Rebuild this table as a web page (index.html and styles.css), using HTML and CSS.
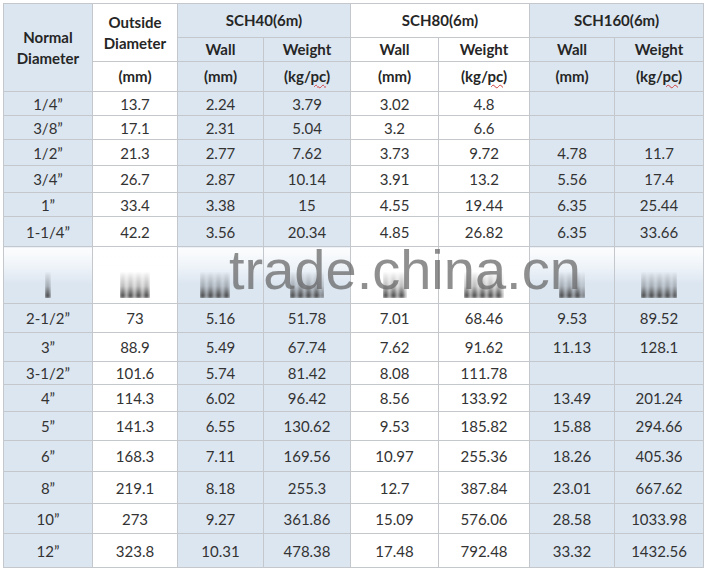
FILE: index.html
```html
<!DOCTYPE html>
<html>
<head>
<meta charset="utf-8">
<link rel="stylesheet" href="styles.css">
</head>
<body>
<div class="wrap">
<table class="pipes">
<colgroup>
<col class="w89"><col class="w85"><col class="w86"><col class="w87"><col class="w88"><col class="w91"><col class="w85"><col class="w89">
</colgroup>
<thead>
<tr class="h34">
<th class="b" rowspan="3">Normal<br>Diameter</th>
<th rowspan="2">Outside<br>Diameter</th>
<th class="b" colspan="2">SCH40(6m)</th>
<th colspan="2">SCH80(6m)</th>
<th class="b" colspan="2">SCH160(6m)</th>
</tr>
<tr class="h24">
<th class="b">Wall</th><th class="b">Weight</th>
<th>Wall</th><th>Weight</th>
<th class="b">Wall</th><th class="b">Weight</th>
</tr>
<tr class="h30">
<th>(mm)</th>
<th class="b">(mm)</th><th class="b">(kg/<span class="sp">pc</span>)</th>
<th>(mm)</th><th>(kg/<span class="sp">pc</span>)</th>
<th class="b">(mm)</th><th class="b">(kg/<span class="sp">pc</span>)</th>
</tr>
</thead>
<tbody>
<tr class="h24"><td>1/4”</td><td>13.7</td><td>2.24</td><td>3.79</td><td>3.02</td><td>4.8</td><td></td><td></td></tr>
<tr class="h24"><td>3/8”</td><td>17.1</td><td>2.31</td><td>5.04</td><td>3.2</td><td>6.6</td><td></td><td></td></tr>
<tr class="h26"><td>1/2”</td><td>21.3</td><td>2.77</td><td>7.62</td><td>3.73</td><td>9.72</td><td>4.78</td><td>11.7</td></tr>
<tr class="h27"><td>3/4”</td><td>26.7</td><td>2.87</td><td>10.14</td><td>3.91</td><td>13.2</td><td>5.56</td><td>17.4</td></tr>
<tr class="h24"><td>1”</td><td>33.4</td><td>3.38</td><td>15</td><td>4.55</td><td>19.44</td><td>6.35</td><td>25.44</td></tr>
<tr class="h30"><td>1-1/4”</td><td>42.2</td><td>3.56</td><td>20.34</td><td>4.85</td><td>26.82</td><td>6.35</td><td>33.66</td></tr>
<tr class="h57 blur">
<td><span class="smear s6"></span></td>
<td><span class="smear s30"></span></td>
<td><span class="smear s30 shift"></span></td>
<td><span class="smear s34"></span></td>
<td><span class="smear s24"></span></td>
<td><span class="smear s40"></span></td>
<td><span class="smear s26"></span></td>
<td><span class="smear s36"></span></td>
</tr>
<tr class="h29"><td>2-1/2”</td><td>73</td><td>5.16</td><td>51.78</td><td>7.01</td><td>68.46</td><td>9.53</td><td>89.52</td></tr>
<tr class="h29"><td>3”</td><td>88.9</td><td>5.49</td><td>67.74</td><td>7.62</td><td>91.62</td><td>11.13</td><td>128.1</td></tr>
<tr class="h23"><td>3-1/2”</td><td>101.6</td><td>5.74</td><td>81.42</td><td>8.08</td><td>111.78</td><td></td><td></td></tr>
<tr class="h27"><td>4”</td><td>114.3</td><td>6.02</td><td>96.42</td><td>8.56</td><td>133.92</td><td>13.49</td><td>201.24</td></tr>
<tr class="h29"><td>5”</td><td>141.3</td><td>6.55</td><td>130.62</td><td>9.53</td><td>185.82</td><td>15.88</td><td>294.66</td></tr>
<tr class="h31"><td>6”</td><td>168.3</td><td>7.11</td><td>169.56</td><td>10.97</td><td>255.36</td><td>18.26</td><td>405.36</td></tr>
<tr class="h32"><td>8”</td><td>219.1</td><td>8.18</td><td>255.3</td><td>12.7</td><td>387.84</td><td>23.01</td><td>667.62</td></tr>
<tr class="h30"><td>10”</td><td>273</td><td>9.27</td><td>361.86</td><td>15.09</td><td>576.06</td><td>28.58</td><td>1033.98</td></tr>
<tr class="h34"><td>12”</td><td>323.8</td><td>10.31</td><td>478.38</td><td>17.48</td><td>792.48</td><td>33.32</td><td>1432.56</td></tr>
</tbody>
</table>
<div class="watermark">trade.china.cn</div>
</div>
</body>
</html>
```
FILE: styles.css
```css
body {
  margin: 3px;
  background: #ffffff;
  font-family: Lato, "Open Sans", sans-serif;
  color: #333333;
}
.wrap {
  position: relative;
  width: 700px;
}
.pipes {
  border-collapse: collapse;
  table-layout: fixed;
  width: 700px;
}
.w89 { width: 89px; }
.w85 { width: 85px; }
.w86 { width: 86px; }
.w87 { width: 87px; }
.w88 { width: 88px; }
.w91 { width: 91px; }
.pipes th,
.pipes td {
  border: 1px solid #c4c8cd;
  padding: 0;
  text-align: center;
  vertical-align: middle;
}
.pipes th {
  font-weight: bold;
  font-size: 15px;
  color: #262626;
  line-height: 21px;
}
.pipes td {
  font-size: 15px;
  line-height: 18px;
}
.pipes .b,
.pipes tbody td:nth-child(1),
.pipes tbody td:nth-child(3),
.pipes tbody td:nth-child(4),
.pipes tbody td:nth-child(7),
.pipes tbody td:nth-child(8) {
  background-color: #dce6f1;
}
.sp {
  text-decoration: underline wavy #d04040;
  text-decoration-thickness: 1px;
  text-underline-offset: 2px;
}
.h23 { height: 23px; }
.h24 { height: 24px; }
.h26 { height: 26px; }
.h27 { height: 27px; }
.h29 { height: 29px; }
.h30 { height: 30px; }
.h31 { height: 31px; }
.h32 { height: 32px; }
.h34 { height: 34px; }
.h57 { height: 57px; }
.pipes tr.blur td {
  vertical-align: bottom;
  padding-bottom: 5px;
  line-height: 0;
  background-image: linear-gradient(to bottom, rgba(255,255,255,0.92) 0%, rgba(255,255,255,0.6) 30%, rgba(255,255,255,0) 65%);
}
.smear {
  display: inline-block;
  height: 26px;
  background: repeating-linear-gradient(to right, #333333 0 5px, rgba(70,70,70,0.35) 5px 8px);
  -webkit-mask-image: linear-gradient(to bottom, rgba(0,0,0,0.03) 0%, rgba(0,0,0,0.35) 55%, rgba(0,0,0,0.75) 82%, #000 100%);
  mask-image: linear-gradient(to bottom, rgba(0,0,0,0.03) 0%, rgba(0,0,0,0.35) 55%, rgba(0,0,0,0.75) 82%, #000 100%);
  filter: blur(1.8px);
}
.s6 { width: 6px; }
.s24 { width: 24px; }
.s26 { width: 26px; }
.s30 { width: 30px; }
.s34 { width: 34px; }
.s36 { width: 36px; }
.s40 { width: 40px; }
.shift { margin-left: -12px; }
.watermark {
  position: absolute;
  left: 226px;
  top: 247px;
  font-family: "Liberation Sans", Arial, sans-serif;
  font-size: 56px;
  line-height: 40px;
  color: rgba(100, 100, 100, 0.72);
  white-space: nowrap;
  pointer-events: none;
}
```
